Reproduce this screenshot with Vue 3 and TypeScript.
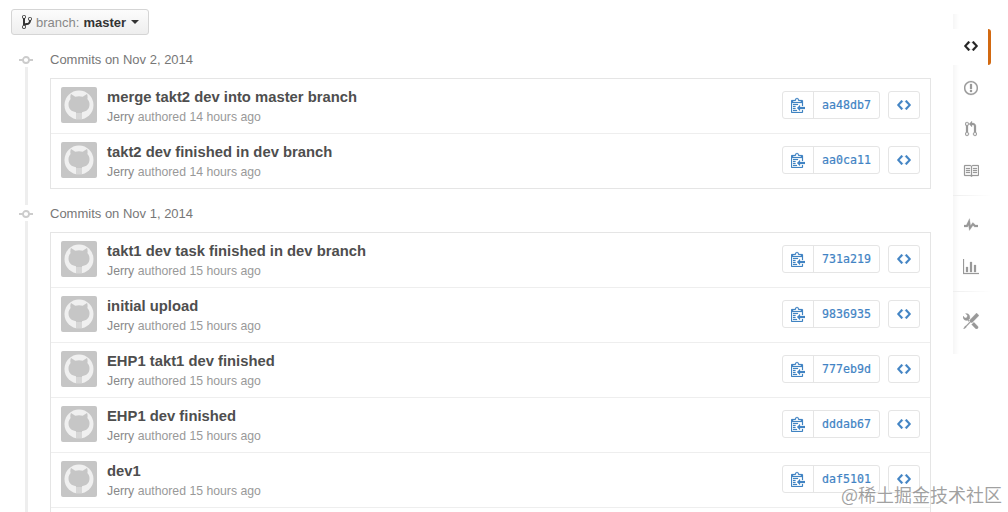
<script setup lang="ts">
interface Commit { title: string; age: string; sha: string }
interface Group { date: string; more: boolean; commits: Commit[] }

const groups: Group[] = [
  {
    date: 'Commits on Nov 2, 2014',
    more: false,
    commits: [
      { title: 'merge takt2 dev into master branch', age: '14 hours ago', sha: 'aa48db7' },
      { title: 'takt2 dev finished in dev branch', age: '14 hours ago', sha: 'aa0ca11' },
    ],
  },
  {
    date: 'Commits on Nov 1, 2014',
    more: true,
    commits: [
      { title: 'takt1 dev task finished in dev branch', age: '15 hours ago', sha: '731a219' },
      { title: 'initial upload', age: '15 hours ago', sha: '9836935' },
      { title: 'EHP1 takt1 dev finished', age: '15 hours ago', sha: '777eb9d' },
      { title: 'EHP1 dev finished', age: '15 hours ago', sha: 'dddab67' },
      { title: 'dev1', age: '15 hours ago', sha: 'daf5101' },
    ],
  },
]

const code = 'M9.5 3L8 4.5 11.5 8 8 11.5 9.5 13 14 8 9.5 3zm-5 0L0 8l4.5 5L6 11.5 2.5 8 6 4.5 4.5 3z'
const clippy = 'M2 13h4v1H2v-1zm5-6H2v1h5V7zm2 3V8l-3 3 3 3v-2h5v-2H9zM4.5 9H2v1h2.5V9zM2 12h2.5v-1H2v1zm9 1h1v2c-.02.28-.11.52-.3.7-.19.18-.42.28-.7.3H1c-.55 0-1-.45-1-1V4c0-.55.45-1 1-1h3c0-1.11.89-2 2-2 1.11 0 2 .89 2 2h3c.55 0 1 .45 1 1v5h-1V6H1v9h10v-2zM2 5h8c0-.55-.45-1-1-1H8c-.55 0-1-.45-1-1s-.45-1-1-1-1 .45-1 1-.45 1-1 1H3c-.55 0-1 .45-1 1z'
const branch = 'M10 5c0-1.11-.89-2-2-2a1.993 1.993 0 0 0-1 3.72v.3c-.02.52-.23.98-.63 1.38-.4.4-.86.61-1.38.63-.83.02-1.48.16-2 .45V4.72a1.993 1.993 0 0 0-1-3.72C.88 1 0 1.89 0 3a2 2 0 0 0 1 1.72v6.56c-.59.35-1 .99-1 1.72 0 1.11.89 2 2 2 1.11 0 2-.89 2-2 0-.53-.2-1-.53-1.36.09-.06.48-.41.59-.47.25-.11.56-.17.94-.17 1.05-.05 1.95-.45 2.75-1.25S8.95 7.77 9 6.73h-.02C9.59 6.37 10 5.73 10 5zM2 1.8c.66 0 1.2.55 1.2 1.2 0 .65-.55 1.2-1.2 1.2C1.35 4.2.8 3.65.8 3c0-.65.55-1.2 1.2-1.2zm0 12.41c-.66 0-1.2-.55-1.2-1.2 0-.65.55-1.2 1.2-1.2.65 0 1.2.55 1.2 1.2 0 .65-.55 1.2-1.2 1.2zm6-8c-.66 0-1.2-.55-1.2-1.2 0-.65.55-1.2 1.2-1.2.65 0 1.2.55 1.2 1.2 0 .65-.55 1.2-1.2 1.2z'
const issue = 'M7 2.3c3.14 0 5.7 2.56 5.7 5.7s-2.56 5.7-5.7 5.7A5.71 5.71 0 0 1 1.3 8c0-3.14 2.56-5.7 5.7-5.7zM7 1C3.14 1 0 4.14 0 8s3.14 7 7 7 7-3.14 7-7-3.14-7-7-7zm1 3H6v5h2V4zm0 6H6v2h2v-2z'
const pull = 'M11 11.28V5c-.03-.78-.34-1.47-.94-2.06C9.46 2.35 8.78 2.03 8 2H7V0L4 3l3 3V4h1c.27.02.48.11.69.31.21.2.3.42.31.69v6.28A1.993 1.993 0 0 0 10 15a1.993 1.993 0 0 0 1-3.72zm-1 2.92c-.66 0-1.2-.55-1.2-1.2 0-.65.55-1.2 1.2-1.2.65 0 1.2.55 1.2 1.2 0 .65-.55 1.2-1.2 1.2zM4 3c0-1.11-.89-2-2-2a1.993 1.993 0 0 0-1 3.72v6.56A1.993 1.993 0 0 0 2 15a1.993 1.993 0 0 0 1-3.72V4.72c.59-.34 1-.98 1-1.72zm-.8 10c0 .66-.55 1.2-1.2 1.2-.65 0-1.2-.55-1.2-1.2 0-.65.55-1.2 1.2-1.2.65 0 1.2.55 1.2 1.2zM2 4.2C1.34 4.2.8 3.65.8 3c0-.65.55-1.2 1.2-1.2.65 0 1.2.55 1.2 1.2 0 .65-.55 1.2-1.2 1.2z'
const book = 'M3 5h4v1H3V5zm0 3h4V7H3v1zm0 2h4V9H3v1zm11-5h-4v1h4V5zm0 2h-4v1h4V7zm0 2h-4v1h4V9zm2-6v9c0 .55-.45 1-1 1H9.5l-1 1-1-1H2c-.55 0-1-.45-1-1V3c0-.55.45-1 1-1h5.5l1 1 1-1H15c.55 0 1 .45 1 1zm-8 .5L7.5 3H2v9h6V3.5zm7-.5H9.5l-.5.5V12h6V3z'
const pulse = 'M11.5 8L8.8 5.4 6.6 8.5 5.5 1.6 2.38 8H0v2h3.6l.9-1.8.9 5.4L9 8.5l1.6 1.5H14V8z'
const graph = 'M16 14v1H0V0h1v14h15zM5 13H3V8h2v5zm4 0H7V3h2v10zm4 0h-2V6h2v7z'
const tools = 'M4.48 7.27c.26.26 1.28 1.33 1.28 1.33l.56-.58-.88-.91 1.69-1.8s-.76-.74-.43-.45c.32-1.19.03-2.51-.87-3.44C4.93.5 3.66.2 2.52.51l1.93 2-.51 1.96-1.89.52-1.93-2C-.19 4.17.1 5.48 1 6.4c.94.98 2.29 1.26 3.48.87zm6.44 1.94l-2.33 2.3 3.84 3.98c.31.33.73.49 1.14.49.41 0 .82-.16 1.14-.49.63-.65.63-1.7 0-2.35l-3.79-3.93zM16 2.53L13.55 0 6.33 7.46l.88.91-4.31 4.46-.99.53-1.39 2.27.35.37 2.2-1.44.51-1.02L7.9 9.08l.88.91L16 2.53z'
</script>

<template>
  <div class="page">
    <main class="content">
      <button class="branch">
        <svg class="branch-icon" viewBox="0 0 10 16" width="10" height="16"><path :d="branch" /></svg>
        <span class="branch-label">branch:</span>
        <span class="branch-name">master</span>
        <span class="caret"></span>
      </button>

      <section v-for="g in groups" :key="g.date" class="group">
        <h3 class="date">
          <svg class="node" viewBox="0 0 16 10" width="16" height="10">
            <rect x="1" y="4" width="14" height="2" fill="#ccc" />
            <circle cx="8" cy="5" r="3" fill="#fff" stroke="#ccc" stroke-width="1.8" />
          </svg>
          {{ g.date }}
        </h3>
        <ul class="list" :class="{ more: g.more }">
          <li v-for="c in g.commits" :key="c.sha" class="row">
            <div class="avatar">
              <svg viewBox="0 0 36 36" width="36" height="36">
                <circle cx="18" cy="18" r="14.500" fill="#f0f0f0" />
                <path d="M10 7l4.300 2.700c2.500-.7 5-.7 7.400 0L26 7c.7 1.800.8 3.400.4 5 1.400 1.600 2.100 3.300 2.100 5.300 0 5-3 7.300-7.500 7.900v7.800h-6v-7.800c-4.500-.6-7.500-2.900-7.500-7.900 0-2 .7-3.700 2.100-5.300-.4-1.600-.3-3.200.4-5z" fill="#c6c6c6" />
                <path d="M16 26v6.500M18 26v6.500M20 26v6.500" stroke="#f0f0f0" stroke-width=".8" />
              </svg>
            </div>
            <div class="meta">
              <p class="title">{{ c.title }}</p>
              <p class="sub"><span class="author">Jerry</span> authored {{ c.age }}</p>
            </div>
            <div class="actions">
              <div class="sha-group">
                <span class="clip"><svg viewBox="0 0 14 16" width="14" height="16"><path :d="clippy" /></svg></span>
                <span class="sha">{{ c.sha }}</span>
              </div>
              <span class="browse"><svg viewBox="0 0 14 16" width="14" height="16"><path :d="code" /></svg></span>
            </div>
          </li>
        </ul>
      </section>
    </main>

    <nav class="side">
      <div class="side-block first">
        <span class="side-item active"><svg viewBox="0 0 14 16" width="14" height="16"><path :d="code" /></svg></span>
        <span class="side-item"><svg viewBox="0 0 14 16" width="14" height="16"><path :d="issue" /></svg></span>
        <span class="side-item"><svg viewBox="0 0 12 16" width="12" height="16"><path :d="pull" /></svg></span>
        <span class="side-item book"><svg viewBox="0 0 16 16" width="16" height="16"><path :d="book" /></svg></span>
      </div>
      <div class="side-block second">
        <span class="side-item"><svg viewBox="0 0 14 16" width="14" height="16"><path :d="pulse" /></svg></span>
        <span class="side-item graph"><svg viewBox="0 0 16 16" width="16" height="16"><path :d="graph" /></svg></span>
      </div>
      <div class="side-block last">
        <span class="side-item"><svg viewBox="0 0 16 16" width="16" height="16"><path :d="tools" /></svg></span>
      </div>
    </nav>

    <div class="watermark">@稀土掘金技术社区</div>
  </div>
</template>

<style>
html, body { margin: 0; background: #fff; overflow: hidden; }
</style>

<style scoped>
.page {
  position: relative;
  width: 1008px;
  height: 512px;
  overflow: hidden;
  display: flex;
  font-family: "Liberation Sans", Arial, sans-serif;
  color: #333;
}
.content {
  width: 931px;
  padding: 9px 0 0 11px;
  box-sizing: border-box;
  flex: none;
}
.branch {
  display: flex;
  align-items: center;
  width: 138px;
  height: 26px;
  box-sizing: border-box;
  padding: 0 0 0 10px;
  border: 1px solid #d5d5d5;
  border-radius: 3px;
  background: linear-gradient(#fcfcfc, #eee);
  font: 13px "Liberation Sans", Arial, sans-serif;
  color: #333;
}
.branch-icon { fill: #333; margin-right: 4px; }
.branch-label { color: #888; margin-right: 4px; }
.branch-name { font-weight: 700; }
.caret {
  margin-left: 5px;
  border-top: 4px solid #333;
  border-left: 4px solid transparent;
  border-right: 4px solid transparent;
}
.group {
  position: relative;
  margin-left: -11px;
  padding-left: 50px;
  padding-top: 14px;
}
.group::before {
  content: "";
  position: absolute;
  left: 25px;
  top: 32px;
  bottom: -16px;
  width: 3px;
  background: #eee;
}
.group:last-child::before { bottom: -100px; }
.date {
  position: relative;
  margin: 0 0 9px;
  font-size: 13px;
  font-weight: 400;
  line-height: 22px;
  color: #777;
  height: 20px;
}
.node {
  position: absolute;
  left: -32px;
  top: 6px;
}
.list {
  list-style: none;
  margin: 0;
  padding: 0;
  border: 1px solid #e5e5e5;
  background: #fff;
}
.list.more::after {
  content: "";
  display: block;
  height: 30px;
  border-top: 1px solid #eee;
}
.row {
  display: flex;
  align-items: center;
  height: 55px;
  box-sizing: border-box;
  padding: 0 10px 2px;
  border-top: 1px solid #eee;
}
.row:first-child { height: 54px; border-top: 0; }
.avatar {
  width: 36px;
  height: 36px;
  flex: none;
  background: #c6c6c6;
  border-radius: 2px;
  margin-right: 10px;
  overflow: hidden;
}
.avatar svg { display: block; }
.meta { flex: 1; min-width: 0; padding-top: 3px; }
.title {
  margin: 0;
  font-size: 14.800px;
  font-weight: 700;
  line-height: 20px;
  color: #4e4e4e;
}
.sub {
  margin: 2px 0 0;
  font-size: 12.250px;
  line-height: 17px;
  color: #999;
}
.author { color: #888; }
.actions { display: flex; gap: 8px; }
.sha-group {
  display: flex;
  height: 28px;
  box-sizing: border-box;
  border: 1px solid #e5e5e5;
  border-radius: 3px;
}
.clip {
  width: 31px;
  display: flex;
  align-items: center;
  justify-content: center;
  border-right: 1px solid #e5e5e5;
  box-sizing: border-box;
}
.clip svg, .browse svg { fill: #4183c4; stroke: #4183c4; stroke-width: 0.2; }
.sha {
  width: 65px;
  text-align: center;
  font: 11.600px/26px "DejaVu Sans Mono", monospace;
  color: #4183c4;
  -webkit-text-stroke: 0.2px #4183c4;
}
.browse {
  width: 32px;
  height: 28px;
  box-sizing: border-box;
  display: flex;
  align-items: center;
  justify-content: center;
  border: 1px solid #e5e5e5;
  border-radius: 3px;
}
.side {
  margin-left: 22px;
  margin-top: 14px;
  width: 38px;
  height: 340px;
  background: linear-gradient(to right, #f6f6f6, #fff 6px);
  flex: none;
}
.side-block {
  display: flex;
  flex-direction: column;
  box-sizing: border-box;
  background: linear-gradient(to right, #eee, #fff) no-repeat left bottom / 100% 1px;
}
.side-block.first { height: 182px; padding-top: 15px; }
.side-block.second { height: 96px; padding-top: 8px; }
.side-block.last { height: 60px; padding-top: 8px; background: none; }
.side-item {
  height: 41px;
  display: flex;
  align-items: center;
  justify-content: center;
  padding-right: 3px;
  flex: none;
}
.side-item.book { margin-top: 1px; }
.side-item.graph { margin-top: 1px; }
.side-item svg { fill: #999; stroke: #999; stroke-width: 0.25; }
.side-item.active {
  height: 36px;
  margin-bottom: 2px;
  box-sizing: border-box;
  background: #fff;
  border-right: 3px solid #d26911;
  border-radius: 0 3px 3px 0;
  padding: 0 0 2px;
}
.side-item.active svg { fill: #222; stroke: #222; }
.watermark {
  position: absolute;
  right: 6px;
  bottom: 8px;
  font: 18px/20px "Noto Sans CJK SC", sans-serif;
  color: rgba(130, 130, 130, 0.75);
}
</style>
